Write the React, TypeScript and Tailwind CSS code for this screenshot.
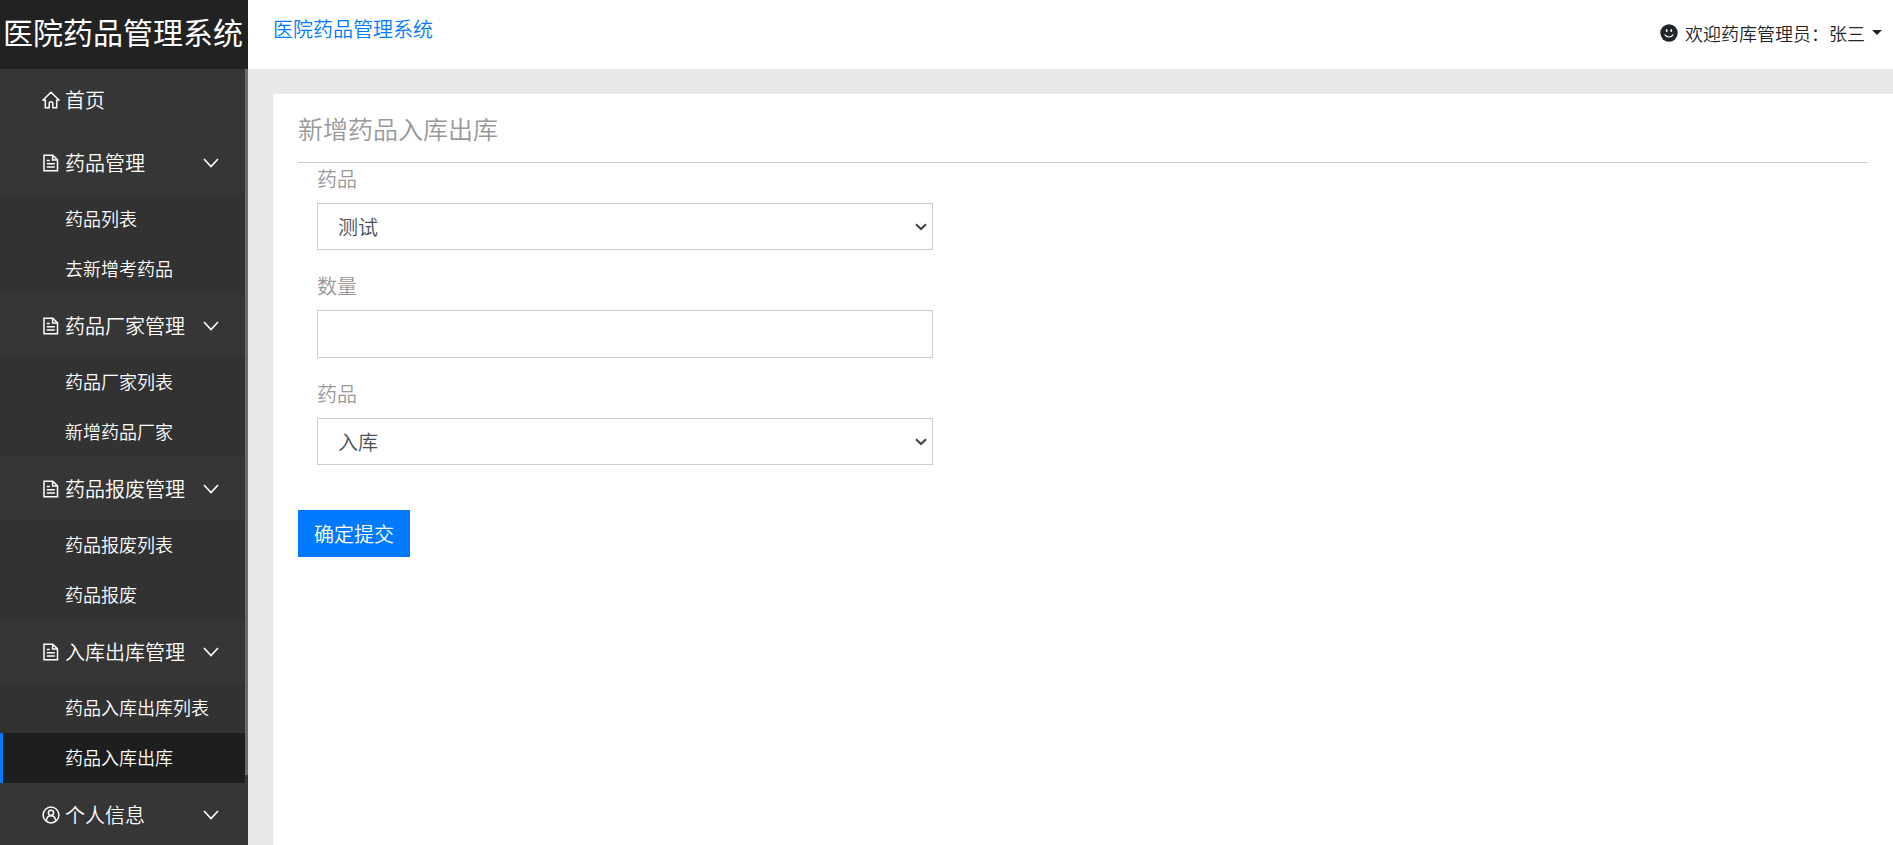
import { useState } from 'react';
import type { FormEvent, ReactNode } from 'react';

interface MenuGroup {
  title: string;
  icon: ReactNode;
  items: string[];
}

const iconProps = {
  viewBox: '0 0 18 18',
  fill: 'none',
  stroke: 'currentColor',
  strokeWidth: 1.5,
  className: 'w-[18px] h-[18px] shrink-0',
  'aria-hidden': true,
} as const;

const HomeIcon = () => (
  <svg {...iconProps}>
    <path d="M3.3 9H1L9 1.3 17 9h-2.3M3.3 8.5v8.3h3.9v-4.3a1.8 1.8 0 0 1 3.6 0v4.3h3.9V8.5" />
  </svg>
);

const FileIcon = () => (
  <svg {...iconProps}>
    <path d="M2 1.3h8.8l4.7 4.6v10.8H2z" />
    <path d="M10.6 1.5v4.6h4.7M4.8 6.4h3M4.8 9.7h8M4.8 13h8" />
  </svg>
);

const UserIcon = () => (
  <svg {...iconProps}>
    <circle cx="9" cy="9" r="7.9" />
    <circle cx="9" cy="6.8" r="2.6" />
    <path d="M4.4 14.8c.2-3 2-5 4.6-5s4.4 2 4.6 5" />
  </svg>
);

const SmileIcon = () => (
  <svg viewBox="0 0 18 18" className="w-[18px] h-[18px] shrink-0" aria-hidden="true">
    <circle cx="9" cy="9" r="8.7" fill="#212529" />
    <ellipse cx="6.7" cy="6.6" rx="0.9" ry="1.5" fill="#fff" />
    <ellipse cx="11.3" cy="6.6" rx="0.9" ry="1.5" fill="#fff" />
    <path d="M4.7 10.5c1.8 3.3 6.8 3.3 8.6 0" fill="none" stroke="#fff" strokeWidth="1.2" />
  </svg>
);

const groups: MenuGroup[] = [
  { title: '药品管理', icon: <FileIcon />, items: ['药品列表', '去新增考药品'] },
  { title: '药品厂家管理', icon: <FileIcon />, items: ['药品厂家列表', '新增药品厂家'] },
  { title: '药品报废管理', icon: <FileIcon />, items: ['药品报废列表', '药品报废'] },
  { title: '入库出库管理', icon: <FileIcon />, items: ['药品入库出库列表', '药品入库出库'] },
  { title: '个人信息', icon: <UserIcon />, items: [] },
];

function Sidebar() {
  const [active, setActive] = useState('药品入库出库');

  return (
    <aside className="w-[248px] shrink-0 flex flex-col bg-[#363636] text-white">
      <h1 className="h-[69px] shrink-0 pl-[3px] bg-[#222] text-[30px] leading-[62px] font-normal whitespace-nowrap">
        医院药品管理系统
      </h1>
      <div className="flex flex-1 min-h-0">
        <nav className="flex-1 overflow-hidden">
          <a href="#" className="flex items-center h-[62px] pl-[42px] gap-[5px] text-xl">
            <HomeIcon />
            首页
          </a>
          {groups.map((group) => (
            <div key={group.title}>
              <button type="button" className="flex items-center w-full h-[63px] pl-[42px] pr-[25px] gap-[5px] text-xl text-left">
                {group.icon}
                <span className="flex-1 whitespace-nowrap">{group.title}</span>
                <svg viewBox="0 0 18 12" className="w-[18px] h-3 shrink-0" fill="none" stroke="currentColor" strokeWidth="1.6" aria-hidden="true">
                  <path d="M2 2l7 7.5L16 2" />
                </svg>
              </button>
              <ul className="bg-[#323232]">
                {group.items.map((item) => (
                  <li key={item}>
                    <a
                      href="#"
                      onClick={() => setActive(item)}
                      className={`flex items-center h-[50px] pl-[62px] pb-[2px] border-l-[3px] text-lg whitespace-nowrap ${
                        active === item ? 'border-[#007bff] bg-[#1e1e1e]' : 'border-transparent'
                      }`}
                    >
                      {item}
                    </a>
                  </li>
                ))}
              </ul>
            </div>
          ))}
        </nav>
        {/* scrollbar */}
        <div className="w-[3px]">
          <div className="h-[91%] bg-[#6b6b6b]" />
        </div>
      </div>
    </aside>
  );
}

function SelectField({ id, label, options }: { id: string; label: string; options: string[] }) {
  return (
    <div className="mb-5">
      <label htmlFor={id} className="block mb-2 text-xl leading-8">{label}</label>
      <div className="grid items-center">
        <select
          id={id}
          className="col-start-1 row-start-1 w-full h-[47px] px-5 appearance-none border border-[#ccc] bg-white text-xl text-[#495057]"
        >
          {options.map((option) => (
            <option key={option}>{option}</option>
          ))}
        </select>
        <svg viewBox="0 0 12 8" className="col-start-1 row-start-1 justify-self-end w-3 h-2 mr-[6px] pointer-events-none" fill="none" stroke="#444" strokeWidth="2.2" aria-hidden="true">
          <path d="M1 1.3l5 4.7 5-4.7" />
        </svg>
      </div>
    </div>
  );
}

export default function App() {
  const [amount, setAmount] = useState('');

  const handleSubmit = (e: FormEvent) => {
    e.preventDefault();
  };

  return (
    <div className="flex h-screen overflow-hidden bg-[#e8e8e8] font-[350] font-['Noto_Sans_CJK_SC',sans-serif]">
      <Sidebar />
      <div className="flex-1 min-w-0 flex flex-col">
        <header className="flex justify-between h-[69px] shrink-0 pl-[25px] pr-[11px] bg-white">
          <a href="#" className="text-xl leading-[58px] text-[#007bff]">医院药品管理系统</a>
          <button type="button" className="flex items-center gap-[7px] pb-1 text-lg text-[#212529]">
            <SmileIcon />
            欢迎药库管理员：张三
            <span className="border-x-[5px] border-t-[5px] border-x-transparent border-t-[#212529]" />
          </button>
        </header>

        <main className="flex-1 mt-[25px] ml-[25px] px-[25px] bg-white text-[#999]">
          <h2 className="h-[69px] border-b border-[#ccc] text-[25px] leading-[68px]">新增药品入库出库</h2>
          <form onSubmit={handleSubmit}>
            <div className="w-5/12 px-[19px]">
              <SelectField id="drug" label="药品" options={['测试']} />
              <div className="mb-5">
                <label htmlFor="amount" className="block mb-2 text-xl leading-8">数量</label>
                <input
                  id="amount"
                  type="text"
                  value={amount}
                  onChange={(e) => setAmount(e.target.value)}
                  className="block w-full h-12 px-5 border border-[#ccc] text-xl text-[#495057]"
                />
              </div>
              <SelectField id="direction" label="药品" options={['入库', '出库']} />
            </div>
            <button type="submit" className="h-[47px] mt-[25px] px-4 bg-[#007bff] text-xl text-white">
              确定提交
            </button>
          </form>
        </main>
      </div>
    </div>
  );
}
